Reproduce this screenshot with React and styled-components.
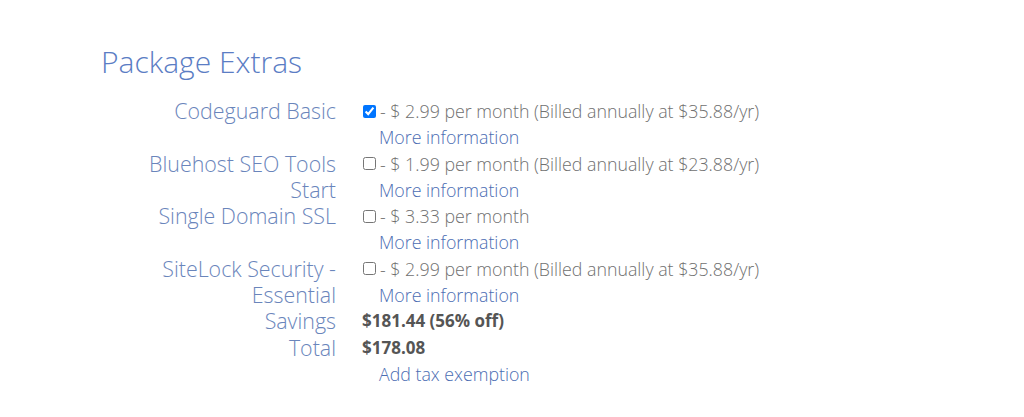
import styled, { createGlobalStyle } from 'styled-components';

const GlobalStyle = createGlobalStyle`
  body {
    margin: 0;
    background: #fff;
    font-family: "Open Sans", "Liberation Sans", sans-serif;
  }
`;

const extras = [
  { name: 'Codeguard Basic', price: '- $ 2.99 per month (Billed annually at $35.88/yr)', checked: true },
  { name: 'Bluehost SEO Tools Start', price: '- $ 1.99 per month (Billed annually at $23.88/yr)' },
  { name: 'Single Domain SSL', price: '- $ 3.33 per month' },
  { name: 'SiteLock Security - Essential', price: '- $ 2.99 per month (Billed annually at $35.88/yr)' },
];

export default function App() {
  return (
    <>
      <GlobalStyle />
      <Page>
        <Title>Package Extras</Title>
        <Grid>
          {extras.map((e) => (
            <Row key={e.name}>
              <Label>{e.name}</Label>
              <Value>
                <Option>
                  <Check type="checkbox" defaultChecked={e.checked} />
                  <span>{e.price}</span>
                </Option>
                <Link href="#">More information</Link>
              </Value>
            </Row>
          ))}
          <Row>
            <Label>Savings</Label>
            <Strong>$181.44 (56% off)</Strong>
          </Row>
          <Row>
            <Label>Total</Label>
            <Value>
              <Strong>$178.08</Strong>
              <Link href="#">Add tax exemption</Link>
            </Value>
          </Row>
        </Grid>
      </Page>
    </>
  );
}

const Page = styled.div`
  padding: 42px 0 0 101px;
`;

const Title = styled.h2`
  margin: 0 0 16px;
  font-size: 30px;
  font-weight: 300;
  line-height: 40px;
  color: #5b7dc4;
`;

const Grid = styled.div`
  display: flex;
  flex-direction: column;
`;

const Row = styled.div`
  display: grid;
  grid-template-columns: 200px 1fr;
  column-gap: 26px;
  margin-left: 35px;
`;

const Label = styled.div`
  text-align: right;
  font-size: 21.4px;
  font-weight: 300;
  line-height: 26.3px;
  color: #6a85bb;
`;

const Value = styled.div`
  display: flex;
  flex-direction: column;
  align-items: flex-start;
`;

const Option = styled.label`
  display: flex;
  align-items: center;
  font-size: 17.8px;
  font-weight: 300;
  line-height: 26.3px;
  color: #707070;
`;

const Check = styled.input`
  width: 13px;
  height: 13px;
  margin: 0 4px 0 1px;
`;

const Link = styled.a`
  padding-left: 17px;
  font-size: 17.8px;
  font-weight: 300;
  line-height: 26.3px;
  color: #4b6db3;
  text-decoration: none;
`;

const Strong = styled.div`
  font-size: 17px;
  font-weight: 700;
  line-height: 26.3px;
  color: #555;
`;
